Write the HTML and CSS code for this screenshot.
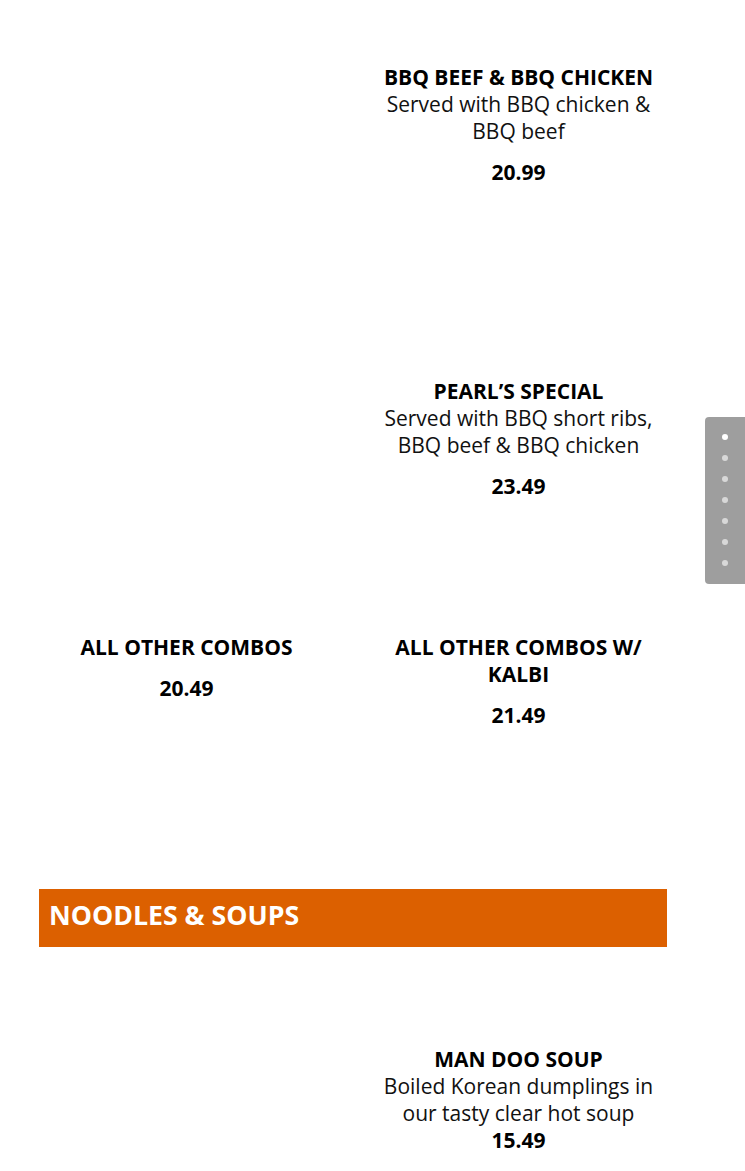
FILE: index.html
```html
<!DOCTYPE html>
<html lang="en">
<head>
<meta charset="utf-8">
<title>Menu</title>
<link rel="stylesheet" href="styles.css">
</head>
<body>
<main class="page">
  <section class="row row-1">
    <div class="item"></div>
    <div class="item">
      <h4 class="title">BBQ BEEF &amp; BBQ CHICKEN</h4>
      <p class="desc">Served with BBQ chicken &amp; BBQ beef</p>
      <p class="price">20.99</p>
    </div>
  </section>
  <section class="row row-2">
    <div class="item"></div>
    <div class="item">
      <h4 class="title">PEARL’S SPECIAL</h4>
      <p class="desc">Served with BBQ short ribs, BBQ beef &amp; BBQ chicken</p>
      <p class="price">23.49</p>
    </div>
  </section>
  <section class="row row-3">
    <div class="item">
      <h4 class="title">ALL OTHER COMBOS</h4>
      <p class="price">20.49</p>
    </div>
    <div class="item">
      <h4 class="title">ALL OTHER COMBOS W/ KALBI</h4>
      <p class="price">21.49</p>
    </div>
  </section>
  <div class="banner"><h2 class="banner-title">NOODLES &amp; SOUPS</h2></div>
  <section class="row row-4">
    <div class="item"></div>
    <div class="item">
      <h4 class="title">MAN DOO SOUP</h4>
      <p class="desc">Boiled Korean dumplings in our tasty clear hot soup</p>
      <p class="price tight">15.49</p>
    </div>
  </section>
</main>
<nav class="dots">
  <span class="dot active"></span>
  <span class="dot"></span>
  <span class="dot"></span>
  <span class="dot"></span>
  <span class="dot"></span>
  <span class="dot"></span>
  <span class="dot"></span>
</nav>
</body>
</html>
```
FILE: styles.css
```css
html, body {
  margin: 0;
  padding: 0;
  background: #fff;
}
body {
  font-family: "Open Sans", "Liberation Sans", sans-serif;
  color: #000;
  font-size: 21px;
  line-height: 27px;
}
.page {
  width: 628px;
  margin-left: 39px;
}
.row {
  display: grid;
  grid-template-columns: 295px 295px;
  column-gap: 37px;
}
.item {
  text-align: center;
}
.title {
  margin: 0;
  font-size: 21px;
  font-weight: 700;
  line-height: 27px;
}
.desc {
  margin: 0;
  font-size: 21px;
  font-weight: 400;
  line-height: 27px;
  color: #111;
}
.price {
  margin: 14px 0 0;
  font-size: 21px;
  font-weight: 700;
  line-height: 27px;
}
.price.tight {
  margin-top: 0;
}
.row-1 { padding-top: 64px; }
.row-2 { margin-top: 192px; }
.row-3 { margin-top: 134px; }
.banner {
  margin-top: 160px;
  height: 58px;
  background: #dc6000;
  display: flex;
  align-items: center;
  padding-left: 10px;
}
.banner-title {
  margin: 0;
  color: #fff;
  font-size: 26.7px;
  font-weight: 700;
  line-height: 40px;
  position: relative;
  top: -3px;
}
.row-4 { margin-top: 99px; }
.dots {
  position: fixed;
  right: 0;
  top: 417px;
  width: 40px;
  height: 167px;
  box-sizing: border-box;
  background: rgba(0, 0, 0, 0.38);
  border-radius: 4px 0 0 4px;
  display: flex;
  flex-direction: column;
  align-items: center;
  padding-top: 17px;
  gap: 15px;
}
.dot {
  display: block;
  width: 6px;
  height: 6px;
  border-radius: 50%;
  background: rgba(255, 255, 255, 0.6);
}
.dot.active {
  background: #fff;
}
```
